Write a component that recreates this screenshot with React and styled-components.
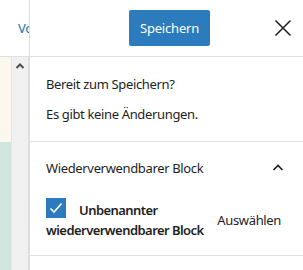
import React from 'react';
import styled, { createGlobalStyle } from 'styled-components';

const GlobalStyle = createGlobalStyle`
    html, body {
        margin: 0;
        padding: 0;
        background: #fff;
    }
    body {
        font-family: "Noto Sans", "Open Sans", sans-serif;
        font-size: 13px;
        letter-spacing: -0.35px;
        color: #1e1e1e;
    }
`;

const PageWrapper = styled.div`
    display: flex;
    width: 303px;
    height: 270px;
    overflow: hidden;
`;

const EditorColumn = styled.div`
    width: 29px;
    display: flex;
    flex-direction: column;
    flex-shrink: 0;
    overflow: hidden;
`;

const EditorTopBar = styled.div`
    height: 57px;
    border-bottom: 1px solid #e0e0e0;
    display: flex;
    align-items: center;
    padding-left: 18px;
    box-sizing: border-box;
    white-space: nowrap;
    color: #2271b1;
`;

const EditorBody = styled.div`
    flex: 1;
    display: flex;
`;

const ContentStrip = styled.div`
    width: 12px;
    display: flex;
    flex-direction: column;
`;

const ColorBlock = styled.div`
    height: ${props => props.h ? `${props.h}px` : 'auto'};
    flex: ${props => props.h ? 'none' : 1};
    background-color: ${props => props.color};
    border-right: 1px solid #e6e6e6;
`;

const ScrollTrack = styled.div`
    width: 16px;
    background-color: #f0f0f0;
    border-right: 1px solid #dcdcdc;
    display: flex;
    justify-content: center;
    padding-top: 6px;
    box-sizing: content-box;
`;

const SidePanel = styled.div`
    flex: 1;
    border-left: 1px solid #dddddd;
    display: flex;
    flex-direction: column;
`;

const PanelHeader = styled.div`
    height: 57px;
    border-bottom: 1px solid #e0e0e0;
    display: flex;
    align-items: center;
    justify-content: flex-end;
    padding-right: 6px;
    box-sizing: border-box;
`;

const SaveButton = styled.button`
    width: 81px;
    height: 36px;
    border: none;
    border-radius: 2px;
    background-color: #2b7bbd;
    color: #fff;
    font-family: inherit;
    font-size: 13px;
    letter-spacing: -0.2px;
    padding: 0;
    margin-right: 61px;
`;

const CloseButton = styled.button`
    width: 24px;
    height: 24px;
    border: none;
    background: none;
    padding: 0;
    display: flex;
    align-items: center;
    justify-content: center;
    margin-right: 2px;
`;

const Section = styled.div`
    border-bottom: 1px solid #e0e0e0;
    padding: ${props => props.pad || '0 16px'};
`;

const Line = styled.p`
    margin: 0;
    line-height: 18px;
    & + & {
        margin-top: 12px;
    }
`;

const SectionTitle = styled.div`
    height: 52px;
    display: flex;
    align-items: center;
    justify-content: space-between;
    padding-right: 2px;
`;

const BlockRow = styled.div`
    display: flex;
    align-items: center;
    padding: 6px 0 15px;
`;

const BlockLabel = styled.label`
    flex: 1;
    line-height: 20px;
    font-weight: 600;
    letter-spacing: -0.55px;
`;

const Check = styled.span`
    display: inline-flex;
    align-items: center;
    justify-content: center;
    width: 20px;
    height: 20px;
    background-color: #2b7bbd;
    vertical-align: top;
    margin-top: -2px;
    margin-right: 13px;
`;

const SelectLink = styled.span`
    padding-right: 6px;
    padding-left: 8px;
`;

const App = () => (
    <>
        <GlobalStyle />
        <PageWrapper>
            <EditorColumn>
                <EditorTopBar>Vorschau</EditorTopBar>
                <EditorBody>
                    <ContentStrip>
                        <ColorBlock h={85} color="#fdf8ee" />
                        <ColorBlock color="#d1e4dd" />
                    </ContentStrip>
                    <ScrollTrack>
                        <svg width="8" height="6" viewBox="0 0 8 6">
                            <path d="M0.5 5 L4 1.5 L7.5 5" fill="none" stroke="#505050" strokeWidth="2" />
                        </svg>
                    </ScrollTrack>
                </EditorBody>
            </EditorColumn>
            <SidePanel>
                <PanelHeader>
                    <SaveButton>Speichern</SaveButton>
                    <CloseButton aria-label="Schließen">
                        <svg width="18" height="18" viewBox="0 0 18 18">
                            <path d="M1.5 1.5 L16.5 16.5 M16.5 1.5 L1.5 16.5" stroke="#1e1e1e" strokeWidth="1.5" />
                        </svg>
                    </CloseButton>
                </PanelHeader>
                <Section pad="18px 16px 18px">
                    <Line>Bereit zum Speichern?</Line>
                    <Line>Es gibt keine Änderungen.</Line>
                </Section>
                <Section>
                    <SectionTitle>
                        <span>Wiederverwendbarer Block</span>
                        <svg width="14" height="14" viewBox="0 0 14 14">
                            <path d="M2.5 9 L7 4.5 L11.5 9" fill="none" stroke="#1e1e1e" strokeWidth="1.6" />
                        </svg>
                    </SectionTitle>
                    <BlockRow>
                        <BlockLabel>
                            <Check>
                                <svg width="16" height="16" viewBox="0 0 16 16">
                                    <path d="M2.5 8.5 L6 12 L13.5 3.5" fill="none" stroke="#fff" strokeWidth="1.6" />
                                </svg>
                            </Check>
                            Unbenannter wiederverwendbarer Block
                        </BlockLabel>
                        <SelectLink>Auswählen</SelectLink>
                    </BlockRow>
                </Section>
            </SidePanel>
        </PageWrapper>
    </>
);

export default App;
